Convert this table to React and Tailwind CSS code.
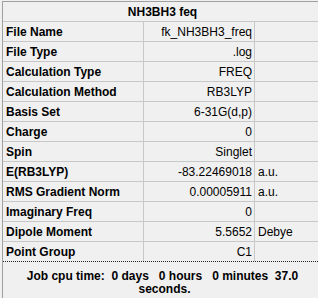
const ROWS = [
  { label: 'File Name', value: 'fk_NH3BH3_freq', unit: '' },
  { label: 'File Type', value: '.log', unit: '' },
  { label: 'Calculation Type', value: 'FREQ', unit: '' },
  { label: 'Calculation Method', value: 'RB3LYP', unit: '' },
  { label: 'Basis Set', value: '6-31G(d,p)', unit: '' },
  { label: 'Charge', value: '0', unit: '' },
  { label: 'Spin', value: 'Singlet', unit: '' },
  { label: 'E(RB3LYP)', value: '-83.22469018', unit: 'a.u.' },
  { label: 'RMS Gradient Norm', value: '0.00005911', unit: 'a.u.' },
  { label: 'Imaginary Freq', value: '0', unit: '' },
  { label: 'Dipole Moment', value: '5.5652', unit: 'Debye' },
  { label: 'Point Group', value: 'C1', unit: '' },
];

export default function App() {
  return (
    <div
      className="h-[298px] w-[318px] overflow-hidden bg-[#f0f0f0] pl-[2px] pt-[1px] text-[12px] text-black"
      style={{ fontFamily: '"Liberation Sans", Arial, sans-serif' }}
    >
      <div className="w-[320px] border-l border-t border-l-[#a0a0a0] border-t-[#a0a0a0]">
        {/* title row */}
        <div className="flex h-[20px] items-center justify-center border-b border-[#c8c8c8] font-bold leading-none">
          NH3BH3 feq
        </div>

        {ROWS.map((r, i) => (
          <div
            key={r.label}
            className={
              i === ROWS.length - 1
                ? 'flex h-[19px] items-center leading-none'
                : 'flex h-[20px] items-center border-b border-[#c8c8c8] leading-none'
            }
          >
            <div className="flex h-full w-[141px] items-center border-r border-[#c8c8c8] pl-[3px] font-bold">
              {r.label}
            </div>
            <div className="flex h-full w-[111px] items-center justify-end border-r border-[#c8c8c8] pr-[2px]">
              {r.value}
            </div>
            <div className="flex h-full flex-1 items-center pl-[3px]">{r.unit}</div>
          </div>
        ))}

        {/* cpu time footer */}
        <div className="h-[40px] border-t border-dotted border-t-[#222] pt-[8px] text-center font-bold leading-[13px]">
          <div className="whitespace-pre">Job cpu time:  0 days   0 hours   0 minutes  37.0</div>
          <div className="whitespace-pre pl-[4px]">seconds.</div>
        </div>
      </div>
    </div>
  );
}
